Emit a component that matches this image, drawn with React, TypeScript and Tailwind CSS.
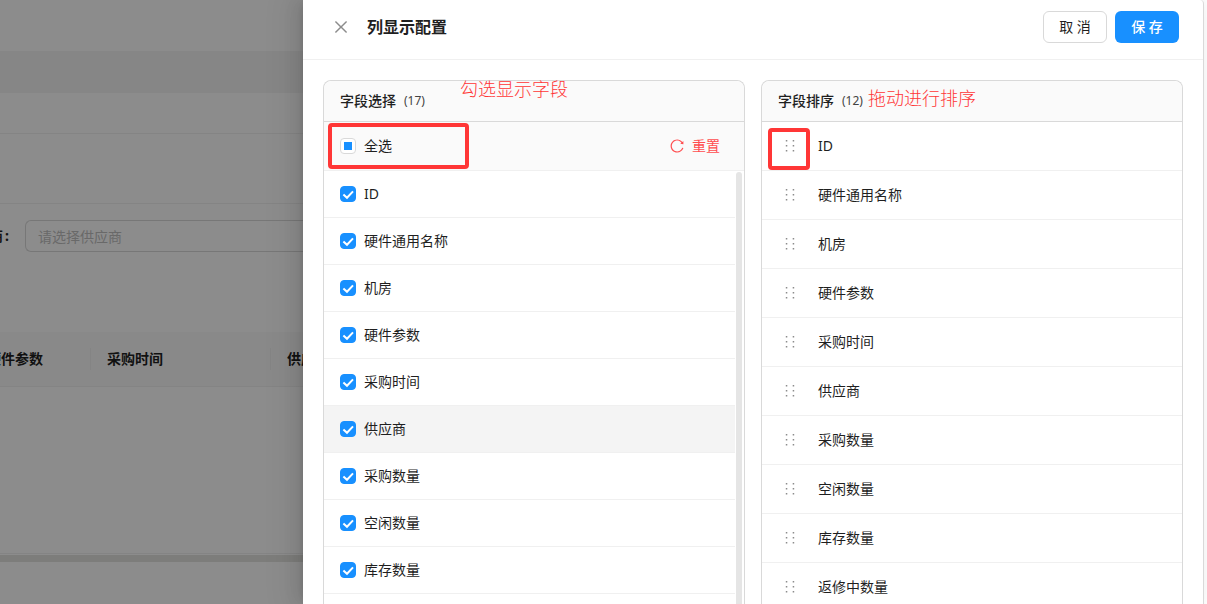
import React from 'react';
import { AiOutlineClose, AiOutlineReload } from 'react-icons/ai';

const selectFields = ['ID', '硬件通用名称', '机房', '硬件参数', '采购时间', '供应商', '采购数量', '空闲数量', '库存数量'];
const sortFields = ['ID', '硬件通用名称', '机房', '硬件参数', '采购时间', '供应商', '采购数量', '空闲数量', '库存数量', '返修中数量'];

const DragDots: React.FC = () => (
  <svg className="h-6 w-6 shrink-0 text-[#8c8c8c]" viewBox="0 0 24 24" fill="currentColor">
    {[6, 11, 16].map((y) => (
      <React.Fragment key={y}>
        <rect x="7.8" y={y} width="1.5" height="1.5" />
        <rect x="14.7" y={y} width="1.5" height="1.5" />
      </React.Fragment>
    ))}
  </svg>
);

interface CheckProps {
  label: string;
  partial?: boolean;
}

const Check: React.FC<CheckProps> = ({ label, partial }) => (
  <label className="flex items-center gap-2">
    <span className="grid h-4 w-4 place-items-center">
      <input
        type="checkbox"
        defaultChecked={!partial}
        className="col-start-1 row-start-1 h-4 w-4 appearance-none rounded border border-[#d9d9d9] bg-white checked:border-[#1890ff] checked:bg-[#1890ff]"
      />
      {partial ? (
        <span className="pointer-events-none col-start-1 row-start-1 h-2 w-2 bg-[#1890ff]" />
      ) : (
        <svg className="pointer-events-none col-start-1 row-start-1 h-4 w-4" viewBox="0 0 16 16" fill="none" stroke="#fff" strokeWidth="2">
          <path d="M3.4 8.4 L7 11.8 L13 5.4" />
        </svg>
      )}
    </span>
    <span>{label}</span>
  </label>
);

interface PanelProps {
  title: string;
  count: number;
  children: React.ReactNode;
}

const Panel: React.FC<PanelProps> = ({ title, count, children }) => (
  <section className="flex min-w-0 flex-1 flex-col rounded-t-lg border border-b-0 border-[#d9d9d9] bg-white">
    <div className="flex h-[41px] shrink-0 items-center gap-2 rounded-t-lg border-b border-[#d9d9d9] bg-[#fafafa] px-4">
      <h3 className="font-medium">{title}</h3>
      <span className="text-xs text-[#434343]">({count})</span>
    </div>
    {children}
  </section>
);

const PageBehind: React.FC = () => (
  <main className="relative min-w-0 flex-1 overflow-hidden bg-white">
    <div className="h-[51px]" />
    <div className="h-[42px] bg-[#f5f5f5]" />
    <div className="h-[41px] border-b border-[#f0f0f0]" />
    <div className="h-[70px] border-b border-[#f0f0f0]" />
    <form className="flex items-center pt-4">
      <label htmlFor="supplier" className="flex w-[25px] shrink-0 justify-end whitespace-nowrap pr-4 font-bold">
        供应商<span className="ml-0.5">:</span>
      </label>
      <input
        id="supplier"
        placeholder="请选择供应商"
        className="h-8 min-w-0 flex-1 rounded-l-md border border-r-0 border-[#d9d9d9] px-3 placeholder:text-[#bfbfbf]"
      />
    </form>
    <table className="mt-20 w-full table-fixed border-separate border-spacing-0">
      <thead>
        <tr className="h-[55px] bg-[#fafafa]">
          <th className="w-[91px] border-b border-[#f0f0f0] p-0">
            <div className="flex h-[22px] items-center justify-end whitespace-nowrap border-r border-[#f0f0f0] pr-[47px]">硬件参数</div>
          </th>
          <th className="w-[180px] border-b border-[#f0f0f0] p-0">
            <div className="flex h-[22px] items-center whitespace-nowrap border-r border-[#f0f0f0] pl-4">采购时间</div>
          </th>
          <th className="border-b border-[#f0f0f0] p-0">
            <div className="flex h-[22px] items-center whitespace-nowrap pl-4">供应商</div>
          </th>
        </tr>
      </thead>
    </table>
    <div className="h-[167px] border-b border-[#f0f0f0]" />
    <div className="mt-px h-[7px] bg-[#e4e4e0]" />
    <div className="absolute inset-0 bg-black/45" />
  </main>
);

const App: React.FC = () => (
  <div className="flex h-screen overflow-hidden bg-white text-sm text-[#1f1f1f] [font-family:'Noto_Sans','Noto_Sans_CJK_SC',sans-serif]">
    <PageBehind />

    <div className="relative mr-[3px] flex w-[901px] shrink-0 flex-col rounded-tr border-r border-[#d9d9d9] bg-white shadow-[-6px_0_16px_0_rgba(0,0,0,0.08),-3px_0_6px_-4px_rgba(0,0,0,0.12),-9px_0_28px_8px_rgba(0,0,0,0.05)]">
      <header className="flex shrink-0 items-center border-b border-[#f0f0f0] px-6 pb-4 pt-[11px]">
        <button aria-label="关闭" className="flex h-7 w-7 items-center justify-center text-[#8c8c8c]">
          <AiOutlineClose className="h-[18px] w-[18px]" />
        </button>
        <h2 className="ml-3 flex-1 text-base font-bold">列显示配置</h2>
        <div className="flex gap-2">
          <button className="h-8 w-16 rounded-md border border-[#d9d9d9] bg-white">取 消</button>
          <button className="h-8 w-16 rounded-md bg-[#1890ff] font-medium text-white">保 存</button>
        </div>
      </header>

      <div className="flex min-h-0 flex-1 gap-4 px-5 pt-5">
        <Panel title="字段选择" count={17}>
          <div className="flex h-[49px] shrink-0 items-center justify-between border-b border-[#f0f0f0] bg-[#fafafa] pl-4 pr-6">
            <Check label="全选" partial />
            <button className="flex items-center gap-[7px] text-[#ff4d4f]">
              <AiOutlineReload className="h-4 w-4" />
              重置
            </button>
          </div>
          <div className="flex min-h-0 flex-1">
            <ul className="flex-1">
              {selectFields.map((name) => (
                <li
                  key={name}
                  className={`flex h-[47px] items-center border-b border-[#f0f0f0] px-4 ${name === '供应商' ? 'bg-[#f4f4f4]' : ''}`}
                >
                  <Check label={name} />
                </li>
              ))}
            </ul>
            {/* scroll thumb */}
            <div className="ml-px mr-0.5 mt-px w-1.5 rounded-t-full bg-[#e5e5e5]" />
          </div>
        </Panel>

        <Panel title="字段排序" count={12}>
          <ul>
            {sortFields.map((name) => (
              <li key={name} className="flex h-[49px] items-center gap-4 border-b border-[#f0f0f0] px-4">
                <DragDots />
                {name}
              </li>
            ))}
          </ul>
        </Panel>
      </div>

      {/* red mark-up drawn on top of the drawer */}
      <div className="pointer-events-none absolute left-[25px] top-[123px] h-[46px] w-[141px] rounded border-4 border-[#ff3636]" />
      <div className="pointer-events-none absolute left-[465px] top-[128px] h-[42px] w-[42px] rounded border-4 border-[#ff3636]" />
      <p className="absolute left-[157px] top-[77px] text-lg leading-6 font-light text-[#ff3636]">勾选显示字段</p>
      <p className="absolute left-[565px] top-[86px] text-lg leading-6 font-light text-[#ff3636]">拖动进行排序</p>
    </div>
  </div>
);

export default App;
